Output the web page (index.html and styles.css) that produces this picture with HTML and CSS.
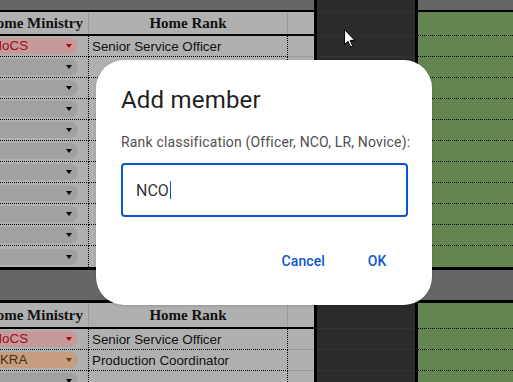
FILE: index.html
```html
<!DOCTYPE html>
<html>
<head>
<meta charset="utf-8">
<link rel="stylesheet" href="styles.css">
</head>
<body>
<div class="sheet">
  <div class="tbl">
    <div class="band band-top"></div>
    <div class="row head"><div class="c a">Home Ministry</div><div class="c b">Home Rank</div><div class="c x"></div></div>
    <div class="row"><div class="c a"><span class="chip red"><span class="lbl">MoCS</span><i></i></span></div><div class="c b">Senior Service Officer</div><div class="c x"></div></div>
    <div class="row"><div class="c a"><span class="chip"><span class="lbl"></span><i></i></span></div><div class="c b"></div><div class="c x"></div></div>
    <div class="row"><div class="c a"><span class="chip"><span class="lbl"></span><i></i></span></div><div class="c b"></div><div class="c x"></div></div>
    <div class="row"><div class="c a"><span class="chip"><span class="lbl"></span><i></i></span></div><div class="c b"></div><div class="c x"></div></div>
    <div class="row"><div class="c a"><span class="chip"><span class="lbl"></span><i></i></span></div><div class="c b"></div><div class="c x"></div></div>
    <div class="row"><div class="c a"><span class="chip"><span class="lbl"></span><i></i></span></div><div class="c b"></div><div class="c x"></div></div>
    <div class="row"><div class="c a"><span class="chip"><span class="lbl"></span><i></i></span></div><div class="c b"></div><div class="c x"></div></div>
    <div class="row"><div class="c a"><span class="chip"><span class="lbl"></span><i></i></span></div><div class="c b"></div><div class="c x"></div></div>
    <div class="row"><div class="c a"><span class="chip"><span class="lbl"></span><i></i></span></div><div class="c b"></div><div class="c x"></div></div>
    <div class="row"><div class="c a"><span class="chip"><span class="lbl"></span><i></i></span></div><div class="c b"></div><div class="c x"></div></div>
    <div class="row end"><div class="c a"><span class="chip"><span class="lbl"></span><i></i></span></div><div class="c b"></div><div class="c x"></div></div>
    <div class="band band-mid"></div>
    <div class="row head head2"><div class="c a">Home Ministry</div><div class="c b">Home Rank</div><div class="c x"></div></div>
    <div class="row"><div class="c a"><span class="chip red"><span class="lbl">MoCS</span><i></i></span></div><div class="c b">Senior Service Officer</div><div class="c x"></div></div>
    <div class="row"><div class="c a"><span class="chip orange"><span class="lbl">SKRA</span><i></i></span></div><div class="c b">Production Coordinator</div><div class="c x"></div></div>
    <div class="row"><div class="c a"><span class="chip"><span class="lbl"></span><i></i></span></div><div class="c b"></div><div class="c x"></div></div>
  </div>

  <div class="dark">
    <div class="drow top"></div>
    <div class="drow h"></div>
    <div class="drow"></div><div class="drow"></div><div class="drow"></div><div class="drow"></div><div class="drow"></div>
    <div class="drow"></div><div class="drow"></div><div class="drow"></div><div class="drow"></div><div class="drow"></div>
    <div class="drow e"></div>
    <div class="drow m"></div>
    <div class="drow h2"></div>
    <div class="drow"></div><div class="drow"></div><div class="drow"></div>
  </div>

  <div class="green">
    <div class="band band-top"></div>
    <div class="grow h"></div>
    <div class="grow"></div><div class="grow"></div><div class="grow"></div><div class="grow"></div><div class="grow"></div>
    <div class="grow"></div><div class="grow"></div><div class="grow"></div><div class="grow"></div><div class="grow"></div>
    <div class="grow e"></div>
    <div class="band band-mid"></div>
    <div class="grow h2"></div>
    <div class="grow"></div><div class="grow"></div><div class="grow"></div>
  </div>
</div>

<svg class="cursor" width="13" height="19" viewBox="0 0 13 19">
  <path d="M0.5 0.5 L0.5 15.5 L4 12.2 L6.6 18 L8.7 17.1 L6.2 11.4 L10.8 11.4 Z" fill="#fff" stroke="#000" stroke-width="1"/>
</svg>

<div class="dialog">
  <div class="title">Add member</div>
  <div class="label">Rank classification (Officer, NCO, LR, Novice):</div>
  <div class="input"><span class="val">NCO</span><span class="caret"></span></div>
  <div class="actions">
    <span class="btn">Cancel</span>
    <span class="btn">OK</span>
  </div>
</div>
</body>
</html>
```

FILE: styles.css
```css
html, body {
  margin: 0;
  padding: 0;
}
body {
  width: 513px;
  height: 382px;
  overflow: hidden;
  position: relative;
  background: #b0b0b0;
  font-family: "Liberation Sans", Arial, sans-serif;
}
.sheet {
  display: flex;
  height: 382px;
}
.tbl {
  margin-left: -20px;
  width: 334px;
  flex: none;
  background: #b0b0b0;
}
.band {
  background: #666666;
}
.band-top {
  height: 12px;
  border-bottom: 2px solid #000;
  box-sizing: border-box;
}
.band-mid {
  height: 33px;
  border-bottom: 3px solid #000;
  box-sizing: border-box;
}
.row {
  display: grid;
  grid-template-columns: 109px 199px 26px;
  height: 21px;
  box-sizing: border-box;
}
.c {
  box-sizing: border-box;
  border-bottom: 1px dotted #000;
  display: flex;
  align-items: center;
  overflow: hidden;
  white-space: nowrap;
  min-width: 0;
  font-size: 13.33px;
  color: #111;
}
.c.a, .c.b {
  border-right: 1px dotted #000;
}
.c.b {
  padding-left: 3px;
}
.c.x {
  border-bottom: 1px solid #9a9a9a;
}
.row.end {
  height: 24px;
  border-bottom: 3px solid #000;
}
.row.end .c {
  border-bottom: none;
}
.row.head {
  height: 24px;
  border-bottom: 2px solid #000;
}
.row.head2 {
  height: 26px;
}
.row.head .c {
  border-bottom: none;
  border-right: 1px solid #999;
  justify-content: center;
  font-family: "Liberation Serif", "Times New Roman", serif;
  font-weight: bold;
  font-size: 15px;
  color: #111;
  padding-left: 0;
}
.row.head .c.x {
  border-right: none;
}
.chip {
  display: flex;
  align-items: center;
  justify-content: space-between;
  height: 16px;
  width: 95px;
  margin-left: 3px;
  border-radius: 8px;
  background: #a1a1a1;
  padding: 0 6px 0 8px;
  box-sizing: border-box;
}
.chip .lbl {
  font-size: 13.33px;
  line-height: 16px;
}
.chip i {
  display: block;
  width: 0;
  height: 0;
  border-left: 3.5px solid transparent;
  border-right: 3.5px solid transparent;
  border-top: 4px solid #000;
}
.chip.red {
  background: #c69a9a;
}
.chip.red .lbl {
  color: #990d18;
}
.chip.red i {
  border-top-color: #b3060f;
}
.chip.orange {
  background: #c69e7f;
}
.chip.orange .lbl {
  color: #4b2e10;
}
.chip.orange i {
  border-top-color: #5e3b12;
}

/* dark column */
.dark {
  width: 104px;
  flex: none;
  box-sizing: border-box;
  border-left: 3px solid #000;
  border-right: 3px solid #000;
  background: #2b2b2b;
}
.drow {
  height: 21px;
  box-sizing: border-box;
  border-bottom: 1px solid #323232;
}
.drow.top { height: 12px; }
.drow.h { height: 24px; }
.drow.e { height: 24px; }
.drow.m { height: 33px; }
.drow.h2 { height: 26px; }

/* green column */
.green {
  flex: 1;
  background: #63854f;
}
.grow {
  height: 21px;
  box-sizing: border-box;
  border-bottom: 1px dotted #000;
}
.grow.h { height: 24px; }
.grow.h2 { height: 26px; }
.grow.e {
  height: 24px;
  border-bottom: 3px solid #000;
}

.cursor {
  position: absolute;
  left: 344px;
  top: 29px;
}

/* dialog */
.dialog {
  position: absolute;
  left: 96px;
  top: 60px;
  width: 336px;
  box-sizing: border-box;
  padding: 24px 24px 24px 25px;
  background: #fff;
  border-radius: 28px;
  box-shadow: 0 1px 3px rgba(0,0,0,0.15);
  font-family: Roboto, "Noto Sans", sans-serif;
}
.title {
  font-size: 24px;
  line-height: 32px;
  color: #1f1f1f;
  margin-bottom: 16px;
  letter-spacing: 0.2px;
}
.label {
  font-size: 14px;
  line-height: 20px;
  color: #4f4f4f;
  margin-bottom: 11px;
  white-space: nowrap;
  letter-spacing: 0.17px;
}
.input {
  height: 54px;
  box-sizing: border-box;
  border: 2px solid #0b57d0;
  border-radius: 4px;
  padding: 0 13px;
  display: flex;
  align-items: center;
}
.val {
  font-size: 16px;
  color: #333;
}
.caret {
  display: block;
  width: 1px;
  height: 18px;
  background: #0b57d0;
  margin-left: 1px;
}
.actions {
  display: flex;
  justify-content: flex-end;
  gap: 8px;
  margin-top: 24px;
  margin-right: -1px;
}
.btn {
  height: 40px;
  min-width: 64px;
  box-sizing: border-box;
  padding: 0 12px;
  display: flex;
  align-items: center;
  justify-content: center;
  font-size: 14px;
  font-weight: 500;
  color: #0b57d0;
  letter-spacing: 0.1px;
}
```
